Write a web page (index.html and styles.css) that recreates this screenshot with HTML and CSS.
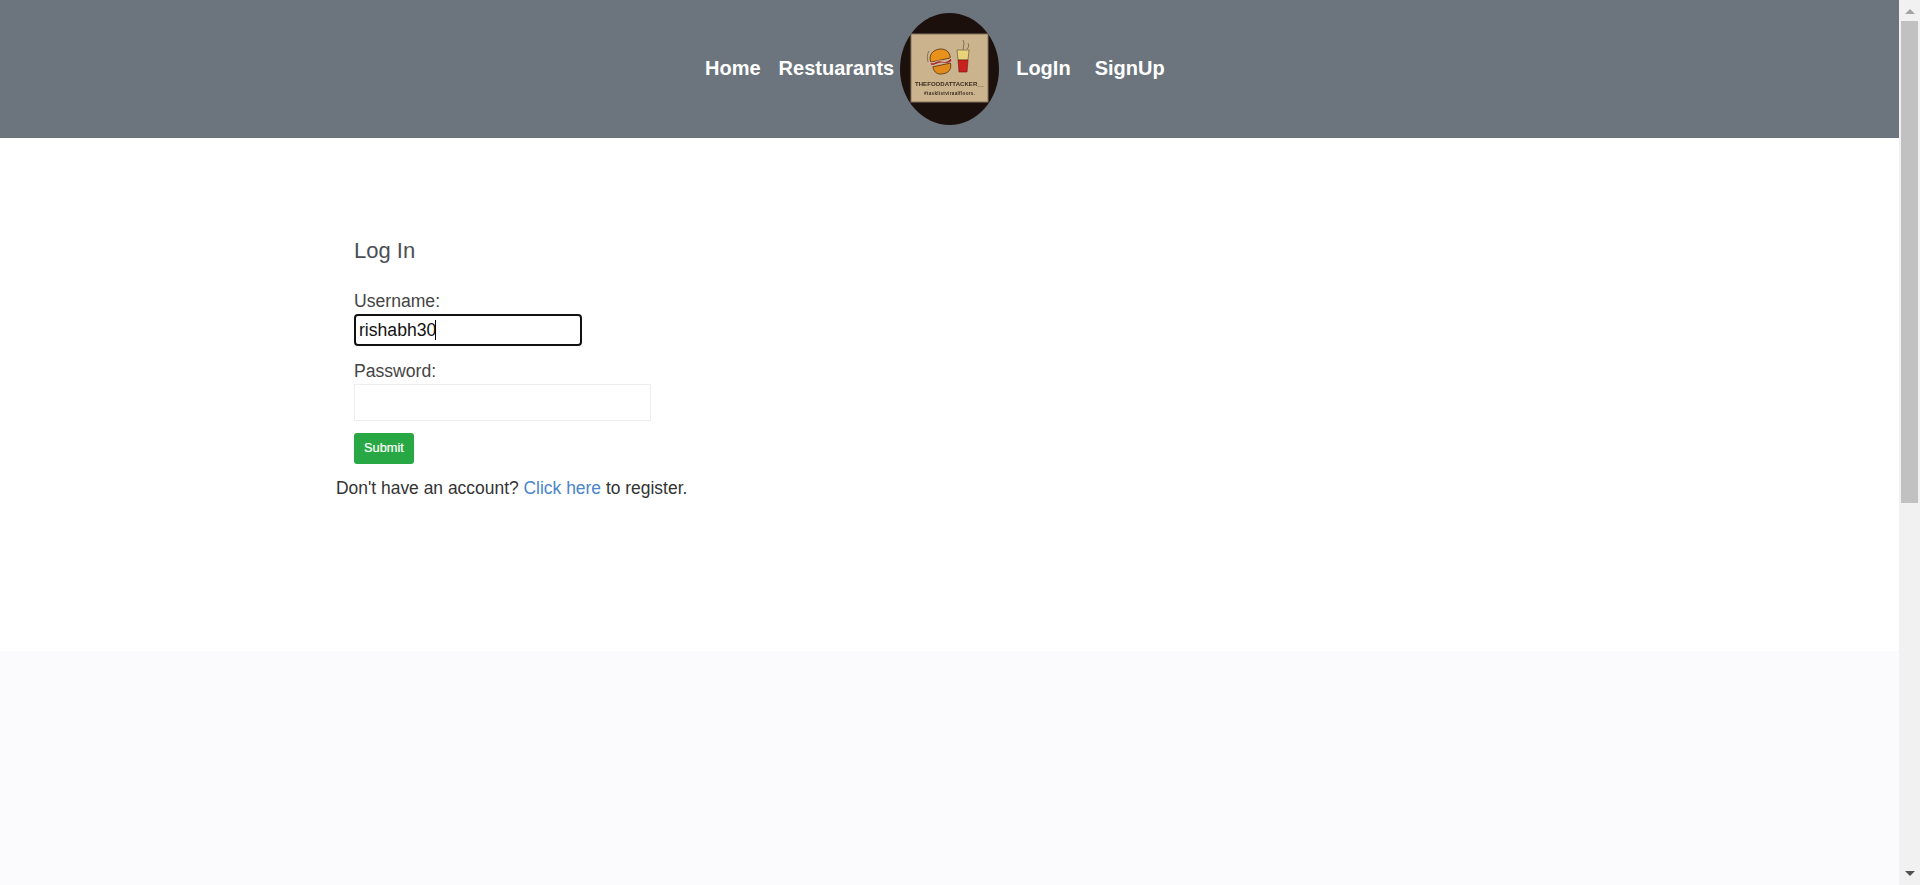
FILE: index.html
```html
<!DOCTYPE html>
<html lang="en">
<head>
<meta charset="utf-8">
<title>Log In</title>
<link rel="stylesheet" href="styles.css">
</head>
<body>
<div class="page">
  <div class="content">
    <header class="topbar">
      <nav class="nav">
        <a class="nav-link home" href="#">Home</a>
        <a class="nav-link rest" href="#">Restuarants</a>
        <svg class="logo" viewBox="0 0 99 112" width="99" height="112" role="img" aria-label="The Food Attacker logo">
          <defs>
            <filter id="soft"><feGaussianBlur stdDeviation="0.4"/></filter>
          </defs>
          <ellipse cx="49.5" cy="56" rx="49.5" ry="56" fill="#1c100c"/>
          <g filter="url(#soft)">
            <rect x="11" y="21" width="77" height="68" fill="#cbb38e" stroke="#85745c" stroke-width="1"/>
            <g transform="rotate(-12 41 49)">
              <path d="M31 47c-1-8 5-11 10-11s11 3 10 11z" fill="#e8921c" stroke="#4a2a12" stroke-width=".7"/>
              <path d="M30 47c4 3 7-1 11 1s7 2 11-1v3c-4 3-7 1-11 0s-7 2-11 0z" fill="#a52a2a" stroke="#efe4d4" stroke-width=".6"/>
              <path d="M32 52h18c0 6-3 9-9 9s-9-3-9-9z" fill="#e08a1c" stroke="#4a2a12" stroke-width=".7"/>
            </g>
            <path d="M29 38c-2 3-2 7-1 11" fill="none" stroke="#6a5540" stroke-width=".7"/>
            <path d="M57 37h12l-1 10H58z" fill="#e7d37a" stroke="#5b4a30" stroke-width=".6"/>
            <path d="M58 47h10l-1 12h-8z" fill="#c9201f" stroke="#6b1a14" stroke-width=".6"/>
            <path d="M63 37l1-7-1-3M67 36c2-2 2-4 1-6" fill="none" stroke="#6f6048" stroke-width=".8"/>
            <text class="logo-title" x="15" y="73" textLength="69">THEFOODATTACKER__</text>
            <text class="logo-sub" x="24" y="82" textLength="51">#tasklistviraalfloors.</text>
          </g>
        </svg>
        <a class="nav-link login" href="#">LogIn</a>
        <a class="nav-link signup" href="#">SignUp</a>
      </nav>
    </header>
    <main class="main">
      <div class="panel">
        <form class="login-form">
          <h2 class="form-title">Log In</h2>
          <label class="field-label" for="username">Username:</label>
          <div class="focus-wrap">
            <input class="input-focus" id="username" type="text" value="rishabh30">
            <span class="caret"></span>
          </div>
          <label class="field-label" for="password">Password:</label>
          <input class="input-plain" id="password" type="password">
          <button class="submit" type="button">Submit</button>
        </form>
        <p class="register">Don't have an account? <a href="#">Click here</a> to register.</p>
      </div>
    </main>
    <footer class="footer"></footer>
  </div>
  <div class="scrollbar" aria-hidden="true">
    <span class="arrow-up"></span>
    <span class="thumb"></span>
    <span class="arrow-down"></span>
  </div>
</div>
</body>
</html>
```

FILE: styles.css
```css
html, body {
  margin: 0;
  padding: 0;
  height: 100%;
  overflow: hidden;
}

body {
  font-family: "Liberation Sans", Arial, sans-serif;
  color: #333;
  background: #fff;
}

.page {
  display: flex;
  height: 885px;
}

.content {
  flex: 1;
  display: flex;
  flex-direction: column;
  min-width: 0;
}

.topbar {
  height: 138px;
  background: #6c757d;
  display: flex;
  align-items: center;
}

.nav {
  display: flex;
  align-items: center;
  padding-left: 705px;
}

.nav-link {
  color: #fff;
  font-weight: 700;
  font-size: 20px;
  text-decoration: none;
  margin-bottom: 2px;
}

.rest { margin-left: 18px; margin-right: 6px; }
.login { margin-left: 17px; }
.signup { margin-left: 24px; }

.logo {
  display: block;
  flex: none;
}

.logo-title {
  font-family: "Liberation Sans", Arial, sans-serif;
  font-size: 6px;
  font-weight: 700;
  fill: #3a2c1e;
}

.logo-sub {
  font-family: "Liberation Sans", Arial, sans-serif;
  font-size: 4.6px;
  font-weight: 700;
  fill: #3a2c1e;
}

.main {
  height: 513px;
  background: #fff;
}

.panel {
  padding: 100px 0 0 336px;
}

.login-form {
  display: flex;
  flex-direction: column;
  align-items: flex-start;
  padding-left: 18px;
}

.form-title {
  margin: 0 0 27px;
  font-size: 22px;
  line-height: 26px;
  font-weight: 400;
  color: #495057;
}

.field-label {
  font-size: 17.6px;
  line-height: 20px;
  color: #444;
  margin-bottom: 3px;
}

.focus-wrap {
  position: relative;
  margin-bottom: 15px;
}

.input-focus {
  display: block;
  box-sizing: border-box;
  width: 228px;
  height: 32px;
  padding: 0 3px;
  border: 2px solid #101010;
  border-radius: 4px;
  outline: none;
  font-family: "Liberation Sans", Arial, sans-serif;
  font-size: 17.6px;
  color: #111;
  background: #fff;
}

.caret {
  position: absolute;
  left: 81px;
  top: 6px;
  width: 1px;
  height: 20px;
  background: #000;
}

.input-plain {
  display: block;
  box-sizing: border-box;
  width: 297px;
  height: 37px;
  margin-bottom: 12px;
  border: 1px solid #eee;
  border-radius: 0;
  outline: none;
  background: #fff;
}

.submit {
  width: 60px;
  height: 31px;
  padding: 0 0 2px;
  border: 0;
  border-radius: 3px;
  background: #28a745;
  color: #fff;
  font-family: "Liberation Sans", Arial, sans-serif;
  font-size: 12.8px;
  -webkit-text-stroke: 0.2px #fff;
}

.register {
  margin: 14px 0 0;
  font-size: 17.45px;
  line-height: 20px;
  color: #333;
}

.register a {
  color: #4a85c9;
  text-decoration: none;
}

.footer {
  flex: 1;
  background: #fbfbfd;
}

.scrollbar {
  flex: none;
  width: 21px;
  position: relative;
  background: #f1f1f1;
  display: flex;
  flex-direction: column;
  align-items: center;
}

.arrow-up {
  margin-top: 9px;
  width: 0;
  height: 0;
  border-left: 5px solid transparent;
  border-right: 5px solid transparent;
  border-bottom: 5px solid #a3a3a3;
}

.thumb {
  margin-top: 7px;
  width: 17px;
  height: 482px;
  background: #c1c1c1;
}

.arrow-down {
  margin-top: auto;
  margin-bottom: 9px;
  width: 0;
  height: 0;
  border-left: 5px solid transparent;
  border-right: 5px solid transparent;
  border-top: 5px solid #505050;
}
```
